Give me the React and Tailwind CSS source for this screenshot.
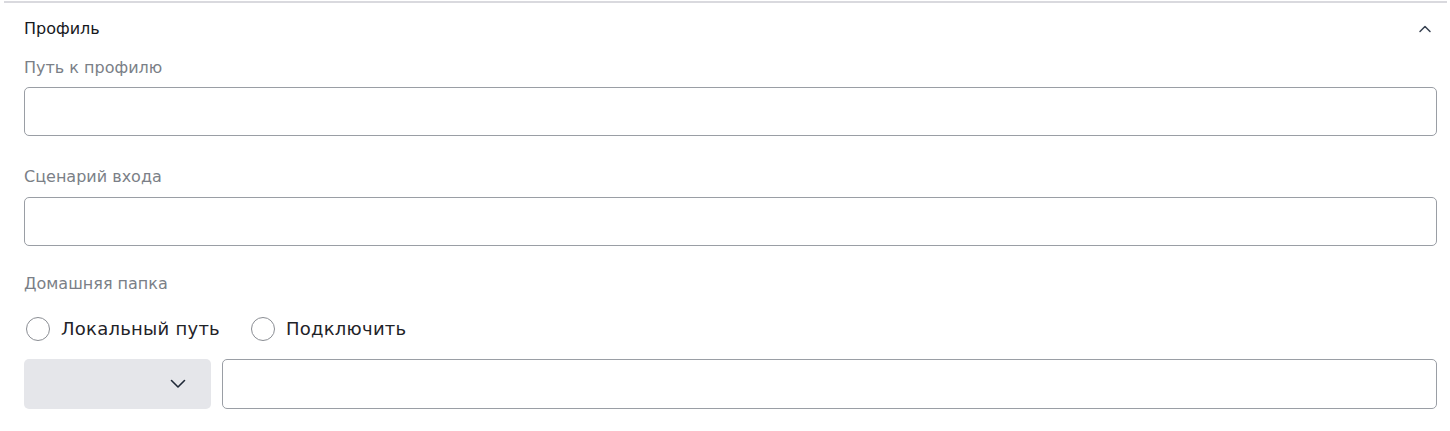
import React from "react";

function ChevronUp() {
  return (
    <svg width="14" height="14" viewBox="0 0 14 14" fill="none" stroke="#374151" strokeWidth="1.5" strokeLinecap="round" strokeLinejoin="round">
      <path d="M2 9.5 L7 4.5 L12 9.5" />
    </svg>
  );
}

function ChevronDown() {
  return (
    <svg width="16" height="16" viewBox="0 0 16 16" fill="none" stroke="#1f2937" strokeWidth="1.6" strokeLinecap="round" strokeLinejoin="round">
      <path d="M1.5 4.5 L8 11 L14.5 4.5" />
    </svg>
  );
}

function Radio({ label }) {
  return (
    <label className="flex items-center gap-[11px]">
      <span className="w-[24px] h-[24px] rounded-full border-[1.5px] border-[#8a8d93] bg-white" />
      <span className="text-[18px] leading-[22px] tracking-[0.25px] text-[#1f2328]">{label}</span>
    </label>
  );
}

export default function App() {
  return (
    <div className="w-[1450px] h-[431px] bg-white" style={{ fontFamily: "'DejaVu Sans', sans-serif" }}>
      <div className="ml-[4px] mr-[3px] pt-[1px]">
        <div className="h-[2px] bg-[#d9d9de]" />
      </div>
      <div className="px-[24px] pr-[13px]">
        <div className="flex items-center justify-between h-[20px] mt-[16px]">
          <span className="text-[16px] leading-[20px] text-[#16181d]">Профиль</span>
          <span className="mr-[5px] flex"><ChevronUp /></span>
        </div>
        <div className="mt-[19px] text-[16px] text-[#7b7f87] leading-[20px] h-[20px]">Путь к профилю</div>
        <div className="mt-[9px] h-[49px] rounded-[5px] border border-[#9a9ea5]" />
        <div className="mt-[31px] text-[16px] text-[#7b7f87] leading-[20px] h-[20px]">Сценарий входа</div>
        <div className="mt-[10px] h-[49px] rounded-[5px] border border-[#9a9ea5]" />
        <div className="mt-[28px] text-[16px] text-[#7b7f87] leading-[20px] h-[20px]">Домашняя папка</div>
        <div className="mt-[23px] flex items-center gap-[31px] pl-[2px]">
          <Radio label="Локальный путь" />
          <Radio label="Подключить" />
        </div>
        <div className="mt-[18px] flex gap-[11px]">
          <div className="w-[187px] h-[50px] rounded-[5px] bg-[#e5e6ea] flex items-center justify-end pr-[25px]">
            <ChevronDown />
          </div>
          <div className="flex-1 h-[50px] rounded-[5px] border border-[#9a9ea5]" />
        </div>
      </div>
    </div>
  );
}
